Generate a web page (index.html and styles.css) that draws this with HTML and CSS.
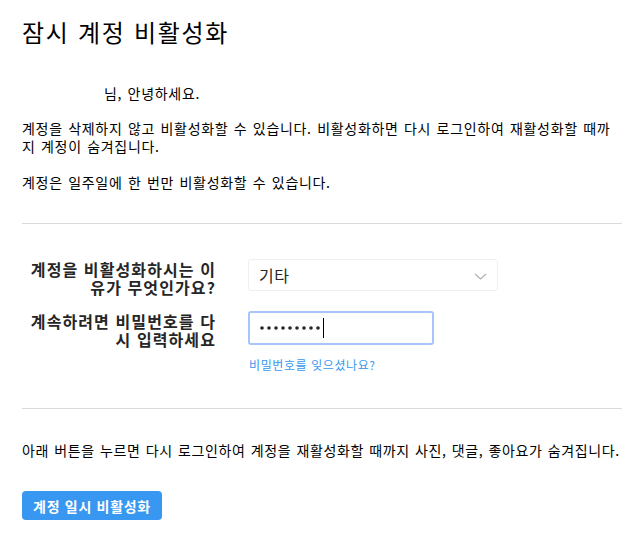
FILE: index.html
```html
<!DOCTYPE html>
<html lang="ko">
<head>
<meta charset="utf-8">
<title>잠시 계정 비활성화</title>
<link rel="stylesheet" href="styles.css">
</head>
<body>
<main class="page">
  <h1 class="title">잠시 계정 비활성화</h1>
  <p class="greet"><span class="username"></span>님, 안녕하세요.</p>
  <p class="text first">계정을 삭제하지 않고 비활성화할 수 있습니다. 비활성화하면 다시 로그인하여 재활성화할 때까지 계정이 숨겨집니다.</p>
  <p class="text second">계정은 일주일에 한 번만 비활성화할 수 있습니다.</p>
  <div class="rule rule-top"></div>
  <form class="form">
    <div class="row">
      <label class="label">계정을 비활성화하시는 이유가 무엇인가요?</label>
      <div class="select">
        <span class="select-value">기타</span>
        <svg class="chevron" width="13" height="7" viewBox="0 0 13 7"><path d="M1 1 L6.5 6 L12 1" fill="none" stroke="#b0b0b0" stroke-width="1.2"/></svg>
      </div>
    </div>
    <div class="row row-pw">
      <label class="label">계속하려면 비밀번호를 다시 입력하세요</label>
      <div class="field">
        <div class="password">
          <svg class="dots" width="62" height="6" viewBox="0 0 62 6" aria-label="•••••••••">
            <circle cx="2" cy="3" r="1.8" fill="#262626"/>
            <circle cx="9" cy="3" r="1.8" fill="#262626"/>
            <circle cx="16" cy="3" r="1.8" fill="#262626"/>
            <circle cx="23" cy="3" r="1.8" fill="#262626"/>
            <circle cx="30" cy="3" r="1.8" fill="#262626"/>
            <circle cx="37" cy="3" r="1.8" fill="#262626"/>
            <circle cx="44" cy="3" r="1.8" fill="#262626"/>
            <circle cx="51" cy="3" r="1.8" fill="#262626"/>
            <circle cx="58" cy="3" r="1.8" fill="#262626"/>
          </svg>
          <span class="caret"></span>
        </div>
        <a class="forgot" href="#">비밀번호를 잊으셨나요?</a>
      </div>
    </div>
  </form>
  <div class="rule rule-bottom"></div>
  <p class="text notice">아래 버튼을 누르면 다시 로그인하여 계정을 재활성화할 때까지 사진, 댓글, 좋아요가 숨겨집니다.</p>
  <button class="button" type="button">계정 일시 비활성화</button>
</main>
</body>
</html>
```
FILE: styles.css
```css
html, body {
  margin: 0;
  padding: 0;
  background: #ffffff;
}
body {
  font-family: "Noto Sans CJK KR", "Noto Sans", sans-serif;
  color: #262626;
}
.page {
  width: 600px;
  padding: 0 12px 0 22px;
}
.title {
  margin: 16px 0 0;
  font-size: 24px;
  line-height: 32px;
  font-weight: 400;
  letter-spacing: 1.7px;
  color: #000;
}
.greet {
  margin: 36px 0 0;
  font-size: 14px;
  line-height: 18px;
  letter-spacing: 0.7px;
  word-spacing: 0.8px;
  color: #000;
}
.username {
  display: inline-block;
  width: 82px;
}
.text {
  font-size: 14px;
  line-height: 18px;
  letter-spacing: 0.7px;
  word-spacing: 0.8px;
  color: #000;
}
.first {
  margin: 17px 0 0;
  max-width: 594px;
}
.second { margin: 18px 0 0; }
.rule {
  height: 1px;
  background: #dbdbdb;
}
.rule-top { margin-top: 32px; }
.form {
  margin-top: 35px;
}
.row {
  display: grid;
  grid-template-columns: 194px 250px;
  column-gap: 32px;
  align-items: start;
}
.row-pw { margin-top: 15px; }
.label {
  text-align: right;
  font-size: 16px;
  line-height: 18px;
  font-weight: 700;
  letter-spacing: 1.1px;
  color: #262626;
  padding-top: 1px;
}
.select {
  height: 30px;
  border: 1px solid #efefef;
  border-radius: 3px;
  display: flex;
  align-items: center;
  justify-content: space-between;
  padding: 0 10px 0 10px;
}
.select-value {
  font-size: 16px;
  letter-spacing: 0.5px;
  color: #262626;
}
.chevron {
  display: block;
  margin-top: 3px;
}
.field {
  display: flex;
  flex-direction: column;
  align-items: flex-start;
}
.password {
  box-sizing: border-box;
  width: 186px;
  height: 34px;
  border: 2px solid #a5c6f7;
  border-radius: 3px;
  display: flex;
  align-items: center;
  padding-left: 10px;
}
.dots {
  display: block;
}
.caret {
  width: 1px;
  height: 20px;
  background: #000;
  margin-left: 1px;
}
.forgot {
  margin-top: 11px;
  font-size: 12px;
  line-height: 18px;
  letter-spacing: 0.6px;
  color: #3897f0;
  text-decoration: none;
  padding-left: 1px;
}
.rule-bottom { margin-top: 34px; }
.notice {
  margin: 32px 0 0;
  letter-spacing: 0.6px;
}
.button {
  margin-top: 32px;
  display: block;
  height: 29px;
  width: 140px;
  padding: 0;
  border: 0;
  border-radius: 4px;
  background: #3897f0;
  color: #fff;
  font-family: "Noto Sans CJK KR", "Noto Sans", sans-serif;
  font-size: 14px;
  font-weight: 700;
  letter-spacing: 0.7px;
}
```
